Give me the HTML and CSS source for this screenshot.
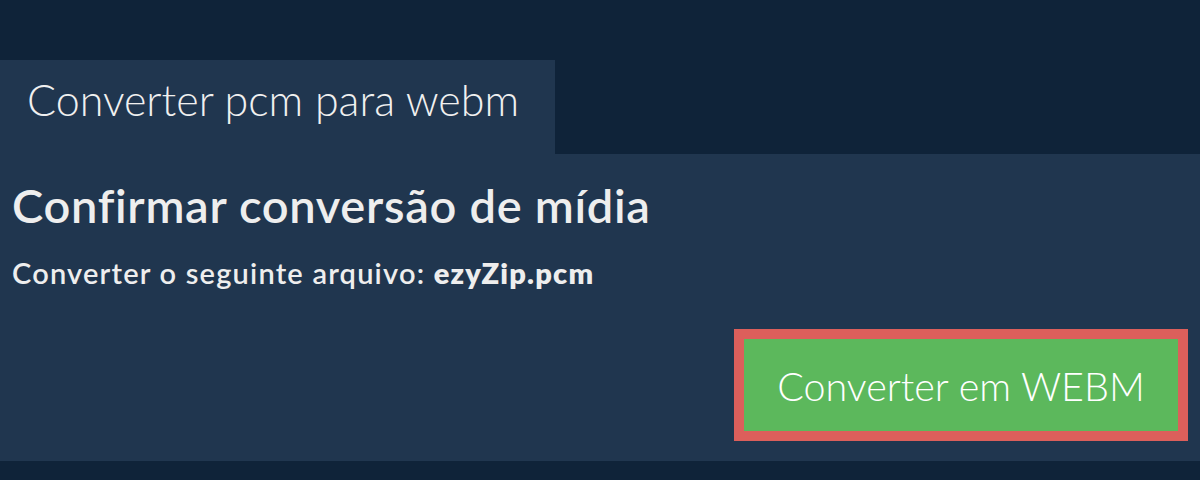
FILE: index.html
```html
<!DOCTYPE html>
<html lang="pt">
<head>
<meta charset="utf-8">
<title>Converter pcm para webm</title>
<link rel="stylesheet" href="styles.css">
</head>
<body>
<div class="page">
  <div class="tab">Converter pcm para webm</div>
  <div class="panel">
    <h1 class="title">Confirmar conversão de mídia</h1>
    <p class="sub">Converter o seguinte arquivo: <strong>ezyZip.pcm</strong></p>
    <div class="actions">
      <button class="btn">Converter em WEBM</button>
    </div>
  </div>
</div>
</body>
</html>
```
FILE: styles.css
```css
html, body {
  margin: 0;
  padding: 0;
  background: #0f2339;
}
.page {
  padding-top: 60px;
  font-family: Lato, "Noto Sans", sans-serif;
  color: #eeeeee;
}
.tab {
  width: 555px;
  height: 94px;
  box-sizing: border-box;
  background: #20364f;
  padding-left: 27px;
  font-weight: 300;
  font-size: 43px;
  line-height: 80px;
  color: #f0f0f0;
  white-space: nowrap;
}
.panel {
  background: #20364f;
  height: 307px;
  box-sizing: border-box;
  padding: 25px 12px 0 12px;
  display: flex;
  flex-direction: column;
}
.title {
  margin: 0;
  font-size: 47px;
  font-weight: 600;
  line-height: 52px;
  letter-spacing: 0.7px;
  white-space: nowrap;
}
.sub {
  margin: 25px 0 0 0;
  font-size: 29px;
  font-weight: 600;
  line-height: 34px;
  letter-spacing: 1.2px;
  white-space: nowrap;
}
.sub strong {
  font-weight: 800;
}
.actions {
  display: flex;
  justify-content: flex-end;
  margin-top: 39px;
}
.btn {
  width: 454px;
  height: 112px;
  box-sizing: border-box;
  border: 10px solid #dc5f5b;
  background: #5cb85c;
  color: #ffffff;
  font-family: Lato, "Noto Sans", sans-serif;
  font-weight: 300;
  font-size: 39.5px;
  padding: 0;
}
```
